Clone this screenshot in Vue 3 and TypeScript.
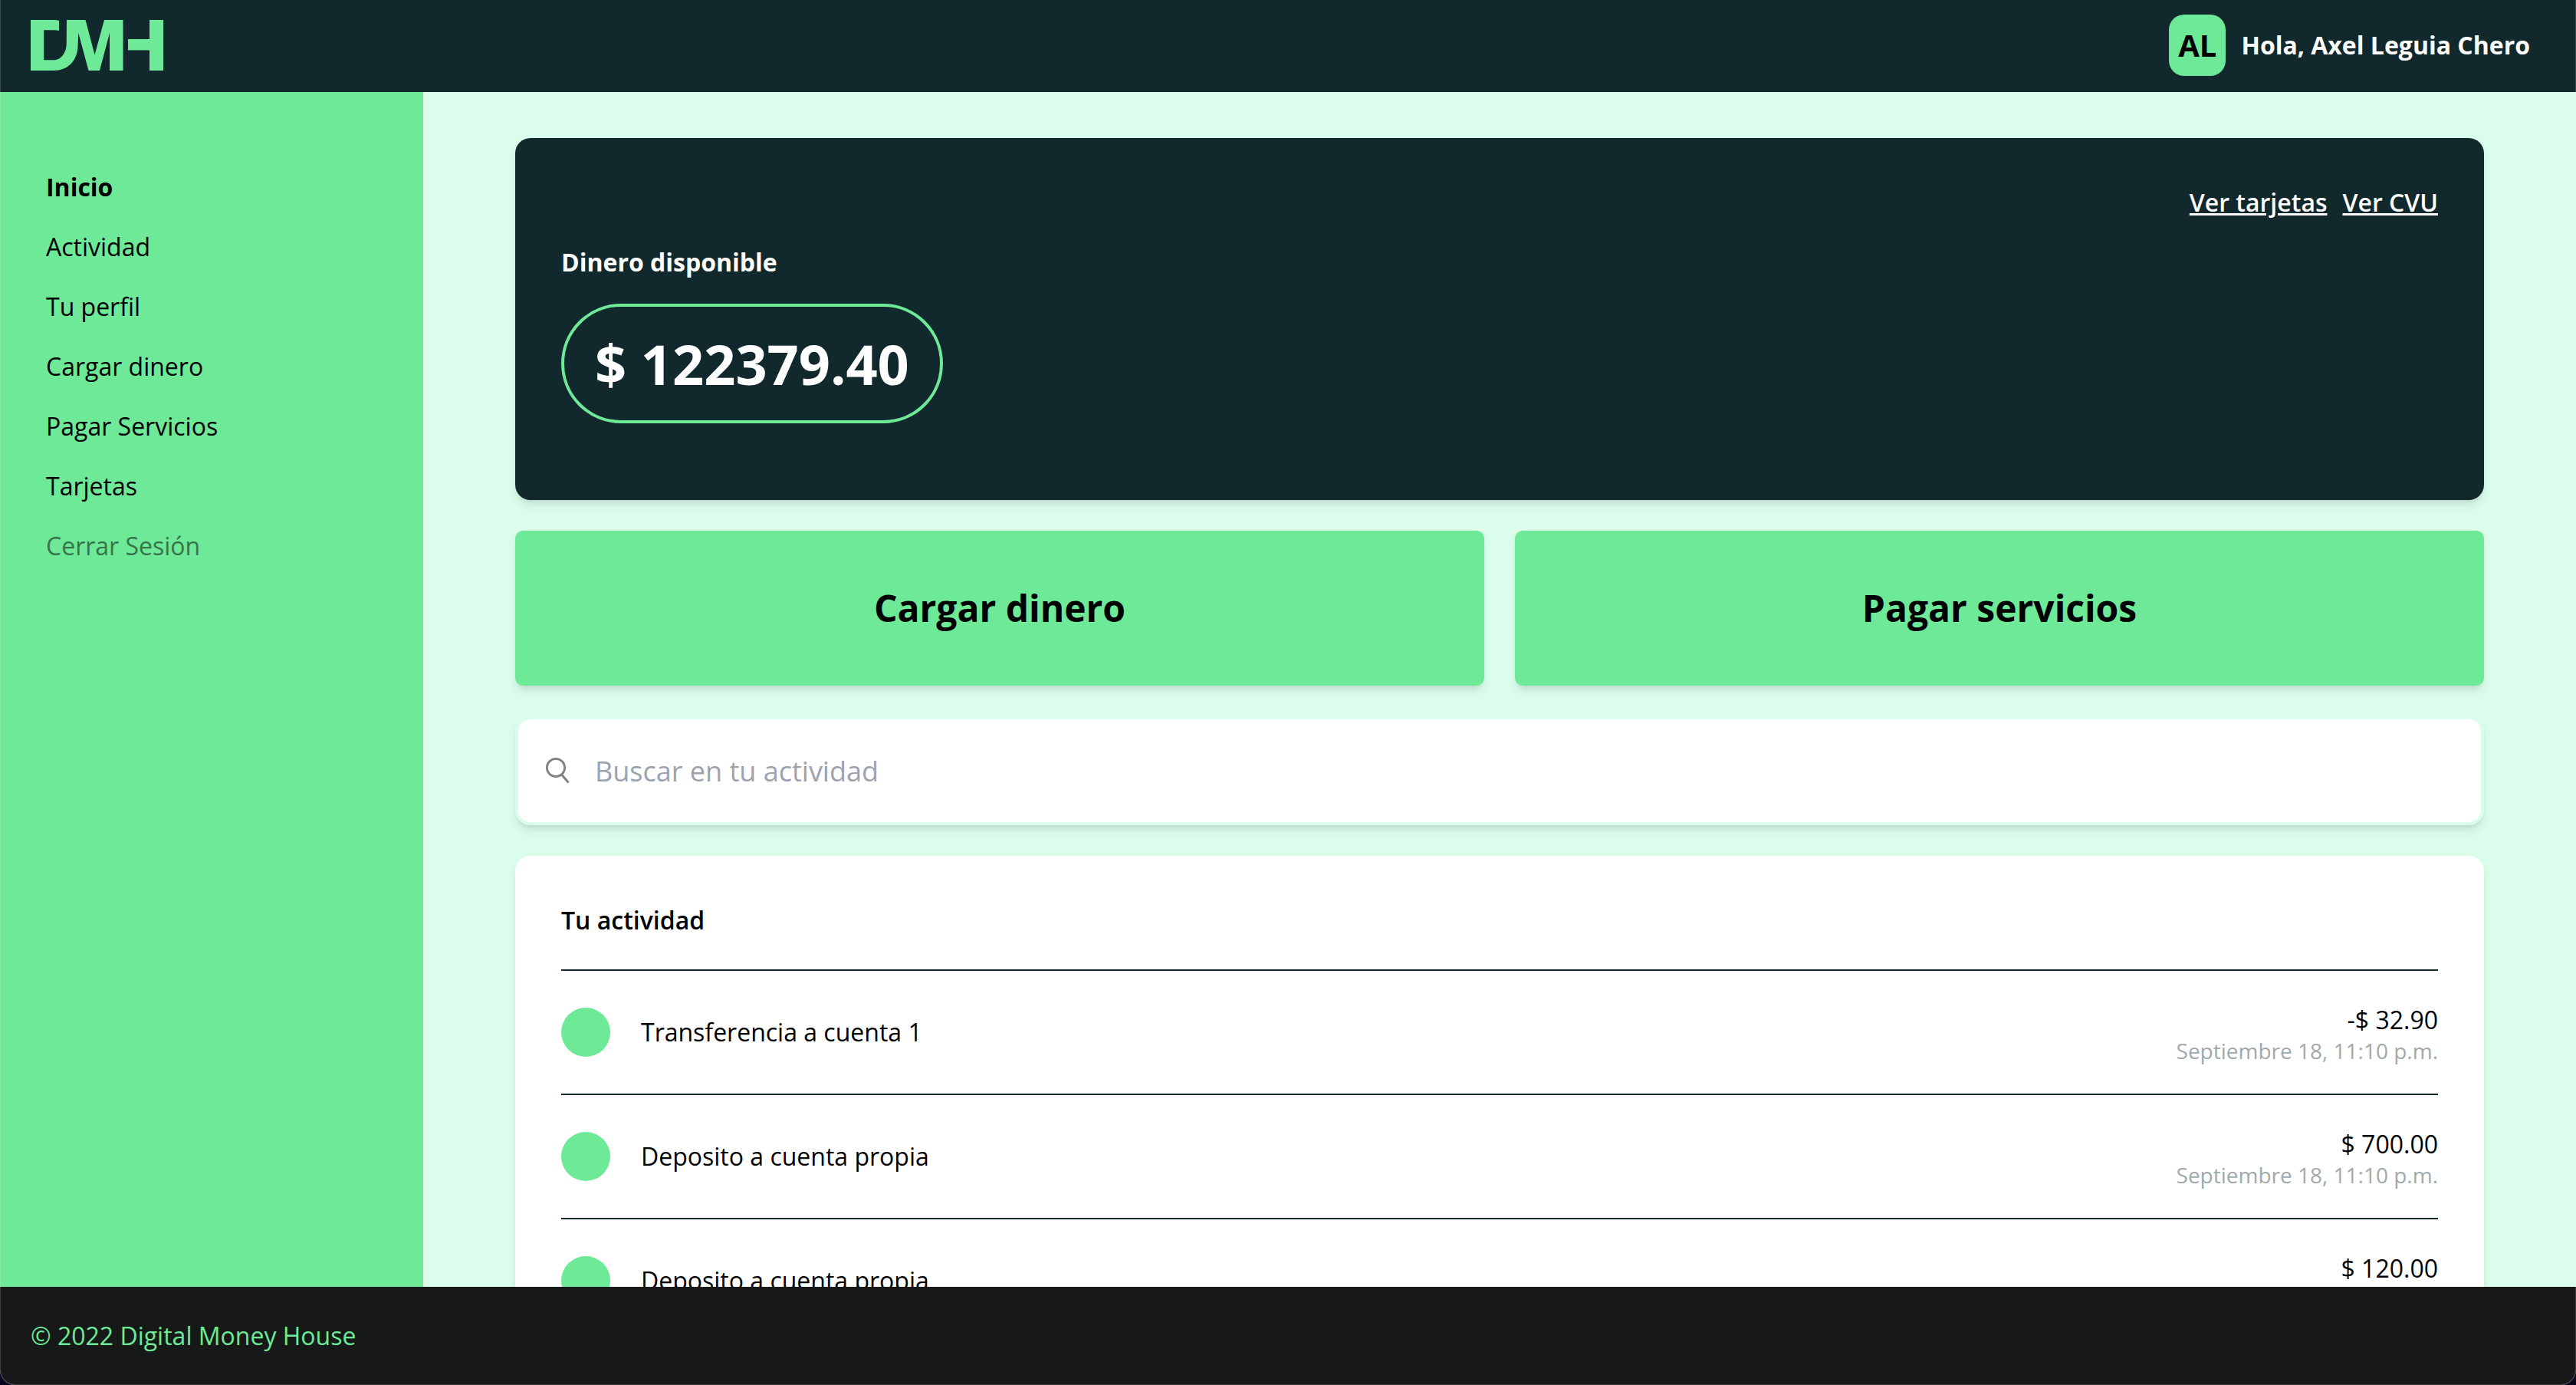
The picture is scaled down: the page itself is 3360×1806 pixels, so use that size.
<script setup lang="ts">
import { ref } from 'vue'

interface NavItem {
  label: string
  state?: 'active' | 'muted'
}

interface Movement {
  title: string
  amount: string
  date: string
}

const navItems: NavItem[] = [
  { label: 'Inicio', state: 'active' },
  { label: 'Actividad' },
  { label: 'Tu perfil' },
  { label: 'Cargar dinero' },
  { label: 'Pagar Servicios' },
  { label: 'Tarjetas' },
  { label: 'Cerrar Sesión', state: 'muted' },
]

const movements: Movement[] = [
  { title: 'Transferencia a cuenta 1', amount: '-$ 32.90', date: 'Septiembre 18, 11:10 p.m.' },
  { title: 'Deposito a cuenta propia', amount: '$ 700.00', date: 'Septiembre 18, 11:10 p.m.' },
  { title: 'Deposito a cuenta propia', amount: '$ 120.00', date: 'Septiembre 18, 11:10 p.m.' },
]

const search = ref('')
</script>

<template>
  <div class="page">
    <header class="header">
      <a href="#" class="logo" aria-label="Digital Money House">
        <svg width="174" height="66" viewBox="40 26 174 66" fill="currentColor" aria-hidden="true">
          <path
            d="M40 26H71Q75 26 77 27V40Q74 39.300 71 39.300H57.200V78.300H71C79 78.300 86.700 69 86.700 57L87 26H111.500L123.500 71.500L136 26H160.500V92H143V43L130 92H115.500L102.300 43L101.500 61C100.500 80 88 92 70 92H40Z"
          />
          <path d="M195 26H213V92H195V65.500H167V51H195Z" />
        </svg>
      </a>
      <div class="user">
        <span class="avatar">AL</span>
        <span class="greeting">Hola, Axel Leguia Chero</span>
      </div>
    </header>

    <div class="body">
      <aside class="sidebar">
        <nav class="nav">
          <a v-for="item in navItems" :key="item.label" href="#" class="nav-link" :class="item.state">{{
            item.label
          }}</a>
        </nav>
      </aside>

      <main class="main">
        <section class="card balance">
          <div class="balance-links">
            <a href="#">Ver tarjetas</a>
            <a href="#">Ver CVU</a>
          </div>
          <p class="balance-label">Dinero disponible</p>
          <p class="balance-amount">$ 122379.40</p>
        </section>

        <div class="actions">
          <button type="button" class="action">Cargar dinero</button>
          <button type="button" class="action">Pagar servicios</button>
        </div>

        <label class="card search">
          <svg class="search-icon" width="32" height="36" viewBox="0 0 32 36" fill="none" stroke="currentColor" aria-hidden="true">
            <circle cx="13" cy="14" r="11.600" stroke-width="2.800" />
            <path d="M20.500 23L29.500 33.500" stroke-width="3" />
          </svg>
          <input v-model="search" type="text" placeholder="Buscar en tu actividad" aria-label="Buscar en tu actividad" />
        </label>

        <section class="card activity">
          <h2 class="activity-title">Tu actividad</h2>
          <ul class="movements">
            <li v-for="(movement, index) in movements" :key="index" class="movement">
              <span class="dot"></span>
              <span class="movement-title">{{ movement.title }}</span>
              <span class="movement-data">
                <span class="amount">{{ movement.amount }}</span>
                <span class="date">{{ movement.date }}</span>
              </span>
            </li>
          </ul>
        </section>
      </main>
    </div>

    <footer class="footer">© 2022 Digital Money House</footer>
  </div>
</template>

<style>
body {
  background: #0b0320;
}
</style>

<style scoped>
.page {
  --green: #6de997;
  --dark: #11292d;
  --light: #dbfeec;
  position: relative;
  display: flex;
  flex-direction: column;
  height: 100vh;
  overflow: hidden;
  border-radius: 0 0 20px 20px;
  background: var(--light);
  color: #000;
  font-family: 'Open Sans', 'Noto Sans', sans-serif;
  font-size: 32px;
  line-height: 48px;
}

.page *,
.page::after {
  box-sizing: border-box;
}

/* Hairline frame round the window */
.page::after {
  content: '';
  position: absolute;
  inset: 0;
  border: 1px solid rgba(255, 255, 255, 0.16);
  border-top: 0;
  border-radius: inherit;
  pointer-events: none;
}

.header {
  display: flex;
  flex: none;
  align-items: center;
  justify-content: space-between;
  padding: 19px 60px 19px 40px;
  border-bottom: 2px solid #10262a;
  background: var(--dark);
}

.logo {
  display: flex;
  color: var(--green);
}

.user {
  display: flex;
  align-items: center;
  gap: 20px;
  color: #fff;
  font-weight: 700;
}

.avatar {
  padding: 16px 12px;
  border-radius: 20px;
  background: var(--green);
  color: #000;
  font-size: 40px;
}

.body {
  display: flex;
  flex: 1;
  min-height: 0;
}

.sidebar {
  flex: none;
  width: 552px;
  padding: 100px 60px;
  background: var(--green);
}

.nav {
  display: flex;
  flex-direction: column;
  gap: 30px;
}

.nav-link {
  color: #000;
  text-decoration: none;
}

.nav-link.active {
  font-weight: 700;
}

.nav-link.muted {
  opacity: 0.5;
}

.main {
  display: flex;
  flex: 1;
  flex-direction: column;
  gap: 40px;
  min-width: 0;
  padding: 60px 120px;
  overflow: hidden;
}

.card {
  flex: none;
  border-radius: 20px;
  background: #fff;
}

.card,
.action {
  box-shadow:
    0 8px 12px -2px rgba(0, 0, 0, 0.1),
    0 4px 8px -4px rgba(0, 0, 0, 0.1);
}

.balance {
  display: flex;
  flex-direction: column;
  align-items: flex-start;
  gap: 30px;
  padding: 60px 60px 100px;
  background: var(--dark);
  color: #fff;
}

.balance-links {
  display: flex;
  align-self: flex-end;
  gap: 20px;
}

.balance-links a {
  color: inherit;
  font-weight: 600;
}

.balance-label {
  margin: 0;
  font-weight: 700;
}

.balance-amount {
  margin: 0;
  padding: 34px 40px;
  border: 4px solid var(--green);
  border-radius: 80px;
  font-size: 72px;
  font-weight: 700;
  line-height: 80px;
}

.actions {
  display: grid;
  flex: none;
  grid-template-columns: 1fr 1fr;
  gap: 40px;
}

.action {
  padding: 65px 40px;
  border: 0;
  border-radius: 10px;
  background: var(--green);
  color: #000;
  font-family: inherit;
  font-size: 48px;
  font-weight: 700;
  line-height: 72px;
  cursor: pointer;
}

.search {
  display: flex;
  align-items: center;
  gap: 32px;
  padding: 0 36px;
  border: 4px solid var(--light);
  background: #fff;
}

.search-icon {
  flex: none;
  color: #808080;
}

.search input {
  flex: 1;
  min-width: 0;
  height: 134px;
  padding: 0;
  border: 0;
  outline: 0;
  background: transparent;
  color: #000;
  font-family: inherit;
  font-size: 36px;
  line-height: 48px;
}

.search input::placeholder {
  color: #9ca3af;
  opacity: 1;
}

.activity {
  padding: 60px;
}

.activity-title {
  margin: 0 0 40px;
  font-size: 32px;
  font-weight: 600;
}

.movements {
  margin: 0;
  padding: 0;
  list-style: none;
}

.movement {
  display: flex;
  align-items: center;
  gap: 40px;
  padding: 40px 0;
  border-top: 2px solid var(--dark);
}

.dot {
  flex: none;
  width: 64px;
  height: 64px;
  border-radius: 50%;
  background: var(--green);
}

.movement-title {
  flex: 1;
}

.movement-data {
  display: flex;
  flex-direction: column;
  align-items: flex-end;
}

.date {
  color: #a0a9ab;
  font-size: 28px;
  line-height: 32px;
}

.footer {
  flex: none;
  padding: 40px;
  background: #171918;
  color: var(--green);
}
</style>
